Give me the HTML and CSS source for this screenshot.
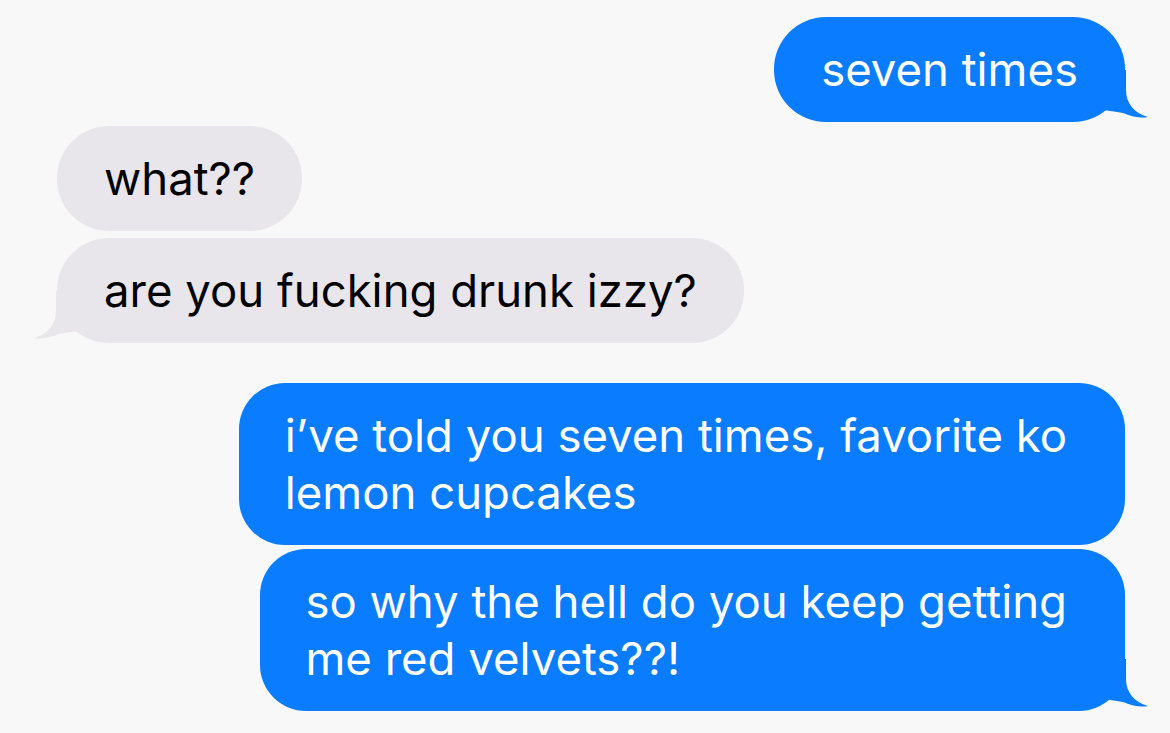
FILE: index.html
```html
<!DOCTYPE html>
<html lang="en">
<head>
<meta charset="utf-8">
<title>Messages</title>
<link rel="stylesheet" href="styles.css">
</head>
<body>
<main class="thread">
  <div class="row row-out">
    <div class="bubble out tailed">seven times
      <svg class="tail" viewBox="0 0 56 44" aria-hidden="true"><path d="M4 -8 L31 -8 L31 12 C31 25 39 35 53 39 C46 40.5 38 39 28 35 C22 34 16 33 8 32 Z"/></svg>
    </div>
  </div>
  <div class="row row-in gap-s">
    <div class="bubble in">what??</div>
  </div>
  <div class="row row-in gap-m">
    <div class="bubble in tailed">are you fucking drunk izzy?
      <svg class="tail" viewBox="0 0 56 44" aria-hidden="true"><path d="M4 -8 L31 -8 L31 12 C31 25 39 35 53 39 C46 40.5 38 39 28 35 C22 34 16 33 8 32 Z"/></svg>
    </div>
  </div>
  <div class="row row-out gap-l">
    <div class="bubble out multi">i’ve told you seven times, favorite ko<br>lemon cupcakes</div>
  </div>
  <div class="row row-out gap-s">
    <div class="bubble out multi tailed">so why the hell do you keep getting<br>me red velvets??!
      <svg class="tail" viewBox="0 0 56 44" aria-hidden="true"><path d="M4 -8 L31 -8 L31 12 C31 25 39 35 53 39 C46 40.5 38 39 28 35 C22 34 16 33 8 32 Z"/></svg>
    </div>
  </div>
</main>
</body>
</html>
```

FILE: styles.css
```css
* {
  box-sizing: border-box;
}

html, body {
  margin: 0;
  padding: 0;
  background: #f8f8f8;
}

body {
  font-family: Inter, "Noto Sans", "Liberation Sans", sans-serif;
  font-size: 45.5px;
  line-height: 57px;
  -webkit-font-smoothing: antialiased;
}

.thread {
  display: flex;
  flex-direction: column;
  padding: 17px 45px 0 57px;
}

.row {
  display: flex;
}

.row-out {
  justify-content: flex-end;
}

.row-in {
  justify-content: flex-start;
}

.gap-s { margin-top: 4px; }
.gap-m { margin-top: 7px; }
.gap-l { margin-top: 40px; }

.bubble {
  position: relative;
  padding: 24px 47px;
  border-radius: 52px;
  white-space: nowrap;
}

.bubble.multi {
  border-radius: 46px;
  padding-right: 58px;
  padding-left: 46px;
}

.out {
  background: #0a7cff;
  color: #ffffff;
}

.in {
  background: #e8e6eb;
  color: #000000;
}

/* little speech tail hanging off the bottom corner */
.tail {
  position: absolute;
  bottom: 0;
  width: 56px;
  height: 44px;
  overflow: visible;
}

.out .tail {
  right: -26px;
  fill: #0a7cff;
}

.in .tail {
  left: -26px;
  fill: #e8e6eb;
  transform: scaleX(-1);
}
```
